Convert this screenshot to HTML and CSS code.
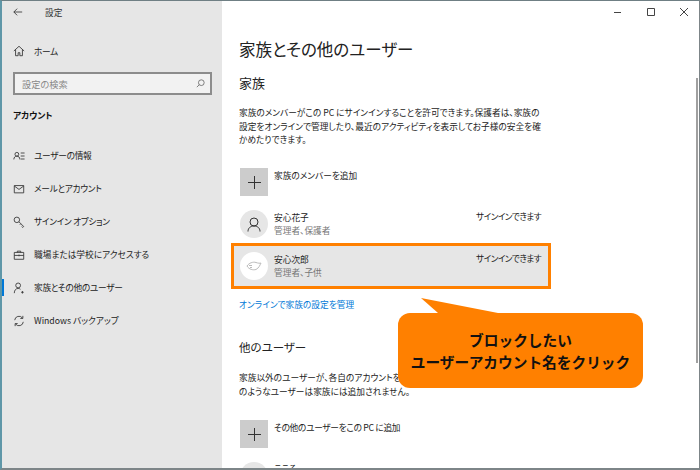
FILE: index.html
```html
<!DOCTYPE html>
<html lang="ja">
  <head>
    <meta charset="utf-8">
    <link rel="stylesheet" href="styles.css">
    <title>設定</title>
  </head>
  <body>
    <div class="window">
      <aside class="sidebar">
        <div class="titlebar">
          <svg class="back" width="10" height="10" viewBox="0 0 12 12"><path d="M11 6H1M5 2L1 6l4 4" /></svg>
          <span>設定</span>
        </div>
        <div class="home">
          <svg class="icon" width="12" height="12" viewBox="0 0 14 14"><path d="M1 7l6-5.500L13 7M3 5.500V12.500h3V9h2v3.500h3V5.500" /></svg>
          <span class="tight">ホーム</span>
        </div>
        <div class="search">
          <span>設定の検索</span>
          <svg width="9" height="9" viewBox="0 0 11 11"><circle cx="6.500" cy="4.500" r="3.500" /><path d="M4 7l-3 3" /></svg>
        </div>
        <div class="group">アカウント</div>
        <ul class="nav">
          <li>
            <svg class="icon" width="12" height="12" viewBox="0 0 14 14"><circle cx="4.500" cy="5" r="2.200" /><path d="M1 11c0-2.500 1.500-3.800 3.500-3.800S8 8.500 8 11M9 3.500h4.500M9 7h4.500M9 10.500h4.500" /></svg>
            <span class="tight">ユーザーの情報</span>
          </li>
          <li>
            <svg class="icon" width="12" height="12" viewBox="0 0 14 14"><path d="M1.500 3h11v8.500h-11zM1.500 3.500L7 7.500l5.500-4" /></svg>
            <span class="tight">メールとアカウント</span>
          </li>
          <li>
            <svg class="icon" width="12" height="12" viewBox="0 0 14 14"><circle cx="4.500" cy="4.500" r="3.200" /><path d="M7 6.800l5.500 5.500-1.200 1-1.300-1.200M9 9.200l-1 1" /></svg>
            <span class="tight">サインイン オプション</span>
          </li>
          <li>
            <svg class="icon" width="12" height="12" viewBox="0 0 14 14"><path d="M1.500 4h11v8h-11zM5 4V2.500h4V4M1.500 7.500h11M7 6.500v2" /></svg>
            <span>職場または学校にアクセスする</span>
          </li>
          <li class="active">
            <svg class="icon" width="12" height="12" viewBox="0 0 14 14"><circle cx="6" cy="4" r="2.800" /><path d="M1.500 13c0-3.500 2-5.500 4.500-5.500 1 0 2 .3 2.700 1M11 10.500v3M9.500 12h3" /></svg>
            <span class="tight">家族とその他のユーザー</span>
          </li>
          <li>
            <svg class="icon" width="12" height="12" viewBox="0 0 14 14"><path d="M2 6a5 5 0 0 1 9-2.500M12 8a5 5 0 0 1-9 2.500M11.500 1v3h-3M2.500 13v-3h3" /></svg>
            <span>Windows バックアップ</span>
          </li>
        </ul>
      </aside>

      <main class="content">
        <div class="controls">
          <svg width="10" height="10" viewBox="0 0 10 10"><path d="M1 5.500h7" /></svg>
          <svg width="10" height="10" viewBox="0 0 10 10"><path d="M1.500 1.500h7v7h-7z" /></svg>
          <svg width="10" height="10" viewBox="0 0 10 10"><path d="M1 1l8 8M9 1l-8 8" /></svg>
        </div>
        <h1>家族とその他のユーザー</h1>
        <h2>家族</h2>
        <p>家族のメンバーがこの PC にサインインすることを許可できます。保護者は、家族の<br>設定をオンラインで管理したり、最近のアクティビティを表示してお子様の安全を確<br>かめたりできます。</p>

        <div class="add">
          <div class="plus"><svg width="13" height="13" viewBox="0 0 13 13"><path d="M6.500 0v13M0 6.500h13" /></svg></div>
          <span>家族のメンバーを追加</span>
        </div>

        <div class="user">
          <div class="avatar">
            <svg width="14" height="15" viewBox="0 0 14 15"><circle cx="7" cy="5" r="4" /><path d="M1 14.500c0-3.500 2.500-5.500 6-5.500s6 2 6 5.500" /></svg>
          </div>
          <div class="who"><span>安心花子</span><small>管理者、保護者</small></div>
          <div class="status">サインインできます</div>
        </div>
        <div class="user selected">
          <div class="avatar photo">
            <svg width="16" height="10" viewBox="0 0 16 10"><path d="M1 5c2-3 6-4.500 9-3.500 2 .7 4 1 5 .5-1 2-2 5-5 6.500-3 .8-7 0-9-3.500zM3 4.500h3M4 6.500h2" /></svg>
          </div>
          <div class="who"><span>安心次郎</span><small>管理者、子供</small></div>
          <div class="status">サインインできます</div>
        </div>

        <a class="manage" href="#">オンラインで家族の設定を管理</a>

        <h3>他のユーザー</h3>
        <p class="others">家族以外のユーザーが、各自のアカウントを<br>のようなユーザーは家族には追加されません。</p>

        <div class="add">
          <div class="plus"><svg width="13" height="13" viewBox="0 0 13 13"><path d="M6.500 0v13M0 6.500h13" /></svg></div>
          <span class="tight">その他のユーザーをこの PC に追加</span>
        </div>

        <div class="user last">
          <div class="avatar"></div>
          <div class="who"><span>ここる</span></div>
        </div>

        <div class="scrollbar"></div>
      </main>

      <div class="callout">
        <svg class="tail" width="80" height="16" viewBox="0 0 80 16"><path d="M0 0L17 15H77z" /></svg>
        ブロックしたい<br>ユーザーアカウント名をクリック
      </div>
    </div>
  </body>
</html>
```

FILE: styles.css
```css
* {
  box-sizing: border-box;
}

html, body {
  margin: 0;
  padding: 0;
}

body {
  width: 700px;
  height: 470px;
  overflow: hidden;
  font-family: "Noto Sans CJK JP", "Noto Sans", sans-serif;
  font-size: 8.700px;
  color: #222;
  font-feature-settings: "palt";
}

svg {
  fill: none;
  stroke: #333;
  stroke-width: 1;
}

.tight {
  letter-spacing: -.3px;
}

.window {
  position: relative;
  display: flex;
  width: 700px;
  height: 470px;
  overflow: hidden;
  border-top: 1px solid #6f7f84;
  border-left: 2px solid #5f97a8;
  border-right: 1px solid #7d8588;
  border-bottom: 2px solid #7d8588;
  background: #fff;
}

/* sidebar */
.sidebar {
  flex: none;
  width: 220px;
  background: #e6e6e6;
}

.titlebar {
  display: flex;
  align-items: center;
  height: 22px;
  padding-left: 11px;
  color: #333;
}

.back {
  margin-right: 22px;
}

.home {
  display: flex;
  align-items: center;
  gap: 9px;
  height: 20px;
  margin-top: 18px;
  padding-left: 11px;
}

.search {
  display: flex;
  align-items: center;
  justify-content: space-between;
  width: 199px;
  height: 23px;
  margin: 11px 0 0 11px;
  padding: 0 5px 0 7px;
  border: 2px solid #8c8c8c;
  background: #f2f2f2;
  color: #888;
  font-size: 9.200px;
}

.search svg {
  stroke: #666;
}

.group {
  margin: 14px 0 0 11px;
  font-weight: 700;
  line-height: 14px;
  color: #111;
}

.nav {
  list-style: none;
  margin: 16px 0 0;
  padding: 0;
}

.nav li {
  position: relative;
  display: flex;
  align-items: center;
  gap: 9px;
  height: 33px;
  padding-left: 11px;
}

.nav li.active::before {
  content: "";
  position: absolute;
  top: 8px;
  left: 0;
  width: 2px;
  height: 17px;
  background: #0078d7;
}

.icon {
  flex: none;
}

/* main pane */
.content {
  position: relative;
  flex: 1;
  padding: 0 0 0 17px;
  overflow: hidden;
}

.controls {
  display: flex;
  justify-content: flex-end;
  gap: 23px;
  height: 22px;
  padding: 6px 10px 0 0;
}

.controls svg {
  stroke: #444;
}

h1 {
  margin: 15px 0 0;
  font-size: 16.500px;
  font-weight: 400;
  line-height: 22px;
}

h2 {
  margin: 14px 0 0;
  font-size: 13px;
  font-weight: 400;
  line-height: 18px;
}

h3 {
  margin: 26px 0 0;
  font-size: 11.500px;
  font-weight: 400;
  line-height: 18px;
}

p {
  margin: 14px 0 0;
  line-height: 13.500px;
}

.others {
  margin-top: 15px;
}

.add {
  display: flex;
  gap: 6px;
  height: 28px;
  margin-top: 21.500px;
  margin-left: 1px;
  line-height: 16px;
}

.others + .add {
  margin-top: 22px;
}

.plus {
  display: flex;
  align-items: center;
  justify-content: center;
  width: 28px;
  height: 28px;
  background: #ccc;
}

.user {
  display: flex;
  align-items: center;
  width: 320px;
  height: 46px;
  margin-left: -8px;
  padding: 0 6px;
  border: 3px solid transparent;
}

.add + .user {
  margin-top: 5px;
}

.user.selected {
  margin-top: -4px;
  border-color: #ff8000;
  background: #e6e6e6;
}

.avatar {
  display: flex;
  flex: none;
  align-items: center;
  justify-content: center;
  width: 28px;
  height: 28px;
  border-radius: 50%;
  background: #e6e6e6;
}

.avatar.photo {
  background: #fff;
}

.avatar.photo svg {
  stroke: #bbb;
}

.who {
  display: flex;
  flex: 1;
  flex-direction: column;
  margin-left: 6px;
  line-height: 13.500px;
}

.last .who {
  align-self: flex-start;
  margin-top: 6px;
}

.who small {
  font-size: 8.700px;
  color: #777;
}

.status {
  align-self: flex-start;
  margin-top: 6px;
  margin-right: 1px;
  letter-spacing: -.6px;
  line-height: 13.500px;
}

.manage {
  display: block;
  margin-top: 9px;
  color: #0078d7;
  text-decoration: none;
  line-height: 14px;
}

.scrollbar {
  position: absolute;
  top: 77px;
  right: 1px;
  width: 2px;
  height: 285px;
  background: #a0a0a0;
}

/* annotation */
.callout {
  position: absolute;
  top: 312px;
  left: 396px;
  width: 245px;
  height: 75px;
  padding-top: 16px;
  border-radius: 12px;
  background: #ff8000;
  color: #111;
  font-size: 14.700px;
  font-weight: 700;
  font-feature-settings: normal;
  line-height: 22px;
  text-align: center;
}

.tail {
  position: absolute;
  top: -15px;
  left: 23px;
  stroke: none;
  fill: #ff8000;
}
```
